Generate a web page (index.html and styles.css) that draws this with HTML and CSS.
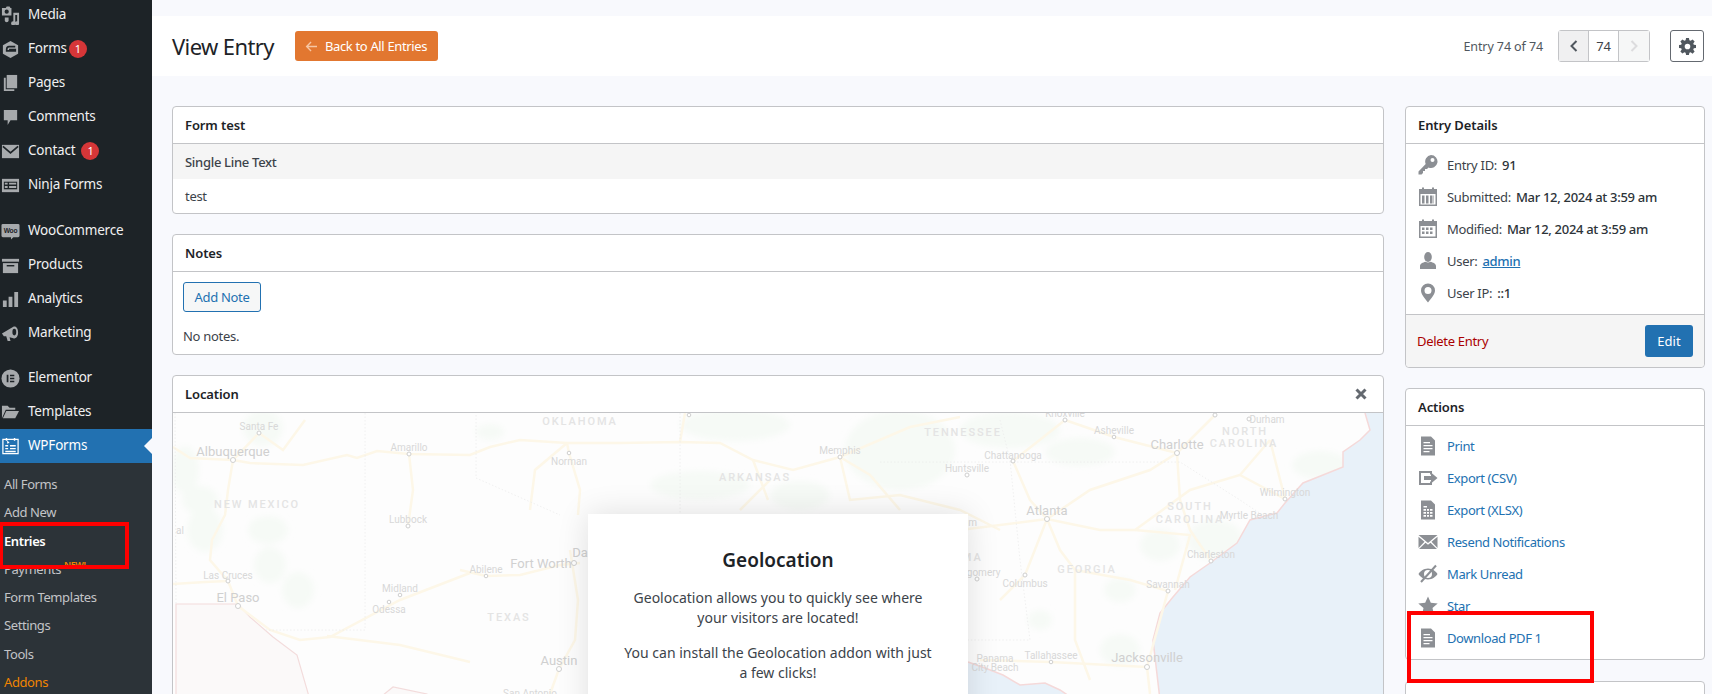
FILE: index.html
```html
<!DOCTYPE html>
<html lang="en">
<head>
  <meta charset="UTF-8">
  <title>View Entry</title>
  <link rel="stylesheet" href="styles.css">
</head>
<body>

<aside class="sidebar">
  <ul class="menu">
    <li class="menu-item">
      <svg class="menu-ico" viewBox="0 0 20 20"><path d="M1 2h4l1-1.500h3l1 1.500h1v8H1z"/><circle cx="6" cy="6" r="2.200" fill="#1d2327"/><path d="M13 7h6v11a2.200 2.200 0 1 1-2-2V9.500h-2V18a2.200 2.200 0 1 1-2-2z"/><path d="M4 12h4v3a2 2 0 1 1-4 0z"/></svg>
      <span>Media</span>
    </li>
    <li class="menu-item">
      <svg class="menu-ico" viewBox="0 0 20 20"><path d="M10 1l8 4.500v9L10 19l-8-4.500v-9z"/><path d="M15 7H8.500C7 7 6 8 6 10v1.500h9V10H8.500" fill="none" stroke="#1d2327" stroke-width="1.800"/></svg>
      <span>Forms</span><b class="badge">1</b>
    </li>
    <li class="menu-item">
      <svg class="menu-ico" viewBox="0 0 20 20"><path d="M6 1h11v14H6z"/><path d="M3 4h2v12h9v2H3z"/></svg>
      <span>Pages</span>
    </li>
    <li class="menu-item">
      <svg class="menu-ico" viewBox="0 0 20 20"><path d="M3 2h14v11h-7l-3 5v-5H3z"/></svg>
      <span>Comments</span>
    </li>
    <li class="menu-item">
      <svg class="menu-ico" viewBox="0 0 20 20"><path d="M1 3h18v14H1z"/><path d="M2 4.500l8 7 8-7" fill="none" stroke="#1d2327" stroke-width="1.800"/></svg>
      <span>Contact</span><b class="badge badge-far">1</b>
    </li>
    <li class="menu-item">
      <svg class="menu-ico" viewBox="0 0 20 20"><path d="M1 3h18v14H1z"/><path d="M3 6h14v8H3z" fill="#1d2327"/><path d="M4 7h3v2H4zm0 3.500h3v2H4zM8.500 7H16v2H8.500zm0 3.500H16v2H8.500z"/></svg>
      <span>Ninja Forms</span>
    </li>
    <li class="menu-item menu-gap">
      <svg class="menu-ico" viewBox="0 0 20 20"><path d="M2 2h16a1.500 1.500 0 0 1 1.500 1.500v11a1.500 1.500 0 0 1-1.500 1.500h-5l-2.500 2.500V16H2a1.500 1.500 0 0 1-1.500-1.500v-11A1.500 1.500 0 0 1 2 2z"/><text class="woo-mark" x="10" y="11.500" text-anchor="middle">Woo</text></svg>
      <span>WooCommerce</span>
    </li>
    <li class="menu-item">
      <svg class="menu-ico" viewBox="0 0 20 20"><path d="M1 3h18v3H1z"/><path d="M2 7.500h16V18H2z"/><path d="M6 9.500h8v1.500H6z" fill="#1d2327"/></svg>
      <span>Products</span>
    </li>
    <li class="menu-item">
      <svg class="menu-ico" viewBox="0 0 20 20"><path d="M2 11h4v7H2zm6-4h4v11H8zm6-5h4v16h-4z"/></svg>
      <span>Analytics</span>
    </li>
    <li class="menu-item">
      <svg class="menu-ico" viewBox="0 0 20 20"><path d="M1 10l12-7c2-1 5 1 5 6s-3 7-5 6l-4-1 1 4H7l-1.500-5H3z"/><ellipse cx="14" cy="8.500" rx="2" ry="3.500" fill="#1d2327"/></svg>
      <span>Marketing</span>
    </li>
    <li class="menu-item menu-gap-small">
      <svg class="menu-ico" viewBox="0 0 20 20"><circle cx="10" cy="10" r="9.500"/><path d="M6 6h1.800v8H6zm3.500 0H14v1.600H9.500zm0 3.200H14v1.600H9.500zm0 3.200H14V14H9.500z" fill="#1d2327"/></svg>
      <span>Elementor</span>
    </li>
    <li class="menu-item">
      <svg class="menu-ico" viewBox="0 0 20 20"><path d="M1 3h6l2 2h6v2H5l-4 9z"/><path d="M5.500 8.500H19L15 16H2z"/></svg>
      <span>Templates</span>
    </li>
    <li class="menu-item menu-current">
      <svg class="menu-ico" viewBox="0 0 20 20"><path d="M2 2.500h16v15H2z" fill="none" stroke="#fff" stroke-width="1.300"/><path d="M5 1h1.500v3H5zm8.500 0H15v3h-1.500zM6.500 3.500L9 6l-2.500 1zM4.500 8.500h3V10h-3zm5 0h6V10h-6zm-5 3h3V13h-3zm5 0h6V13h-6zm-5 3h11V16h-11z" fill="#fff"/></svg>
      <span>WPForms</span>
    </li>
  </ul>
  <ul class="submenu">
    <li>All Forms</li>
    <li>Add New</li>
    <li class="sub-current">Entries</li>
    <li class="sub-new">Payments<em class="new-tag">NEW!</em></li>
    <li>Form Templates</li>
    <li>Settings</li>
    <li>Tools</li>
    <li class="sub-addons">Addons</li>
  </ul>
</aside>

<main class="page">
  <header class="topbar">
    <h1>View Entry</h1>
    <a class="back-btn">
      <svg viewBox="0 0 14 12" width="13" height="11"><path d="M13 6H2M6.500 1.200L1.700 6l4.800 4.800" fill="none" stroke="#f6c6a4" stroke-width="1.500"/></svg>
      Back to All Entries
    </a>
    <span class="entry-count">Entry 74 of 74</span>
    <div class="pager">
      <span class="pager-prev"><svg viewBox="0 0 8 12" width="8" height="12"><path d="M6.500 1L1.500 6l5 5" fill="none" stroke="#50575e" stroke-width="2"/></svg></span>
      <span class="pager-num">74</span>
      <span class="pager-next"><svg viewBox="0 0 8 12" width="8" height="12"><path d="M1.500 1l5 5-5 5" fill="none" stroke="#dcdcde" stroke-width="2"/></svg></span>
    </div>
    <button class="gear-btn">
      <svg viewBox="0 0 20 20" width="17" height="17"><path fill="#50575e" fill-rule="evenodd" d="M8.300 0h3.400l.5 2.700 1.500.6 2.300-1.600 2.400 2.400-1.600 2.300.6 1.500 2.600.4v3.400l-2.600.5-.6 1.500 1.600 2.300-2.400 2.400-2.300-1.600-1.500.6-.5 2.600H8.300l-.5-2.600-1.500-.6L4 18.300l-2.400-2.400 1.600-2.300-.6-1.500L0 11.700V8.300l2.600-.4.6-1.500-1.600-2.300L4 1.700l2.300 1.600 1.500-.6zM10 6.700a3.300 3.300 0 1 0 0 6.600 3.300 3.300 0 0 0 0-6.600z"/></svg>
    </button>
  </header>

  <div class="columns">
    <div class="col-left">
      <section class="card">
        <h2 class="card-title">Form test</h2>
        <div class="field-name">Single Line Text</div>
        <div class="field-value">test</div>
      </section>

      <section class="card">
        <h2 class="card-title">Notes</h2>
        <div class="notes-body">
          <button class="note-btn">Add Note</button>
          <p class="no-notes">No notes.</p>
        </div>
      </section>

      <section class="card card-map">
        <h2 class="card-title">Location
          <svg class="close-x" viewBox="0 0 12 12" width="12" height="12"><path d="M1.500 1.500l9 9m0-9l-9 9" stroke="#646970" stroke-width="3"/></svg>
        </h2>
        <div class="map">
          <svg class="map-svg" viewBox="173 413 1210 300" width="1210" height="300">
            <defs><filter id="soft"><feGaussianBlur stdDeviation="3"/></filter></defs>
            <rect x="173" y="413" width="1210" height="300" fill="#fdfdfd"/>

            <g fill="#f6faf6" filter="url(#soft)">
              <ellipse cx="263" cy="428" rx="20" ry="18"/>
              <ellipse cx="185" cy="470" rx="14" ry="24"/>
              <ellipse cx="200" cy="500" rx="18" ry="14"/>
              <ellipse cx="205" cy="530" rx="18" ry="22"/>
              <ellipse cx="268" cy="530" rx="20" ry="14"/>
              <ellipse cx="270" cy="565" rx="16" ry="18"/>
              <ellipse cx="298" cy="590" rx="16" ry="18"/>
              <ellipse cx="490" cy="432" rx="14" ry="8"/>
              <ellipse cx="735" cy="425" rx="55" ry="16"/>
              <ellipse cx="700" cy="485" rx="50" ry="14"/>
              <ellipse cx="800" cy="495" rx="30" ry="14"/>
              <ellipse cx="900" cy="450" rx="55" ry="40"/>
              <ellipse cx="1010" cy="430" rx="50" ry="18"/>
              <ellipse cx="1080" cy="452" rx="35" ry="14"/>
              <ellipse cx="1120" cy="590" rx="16" ry="12"/>
              <ellipse cx="1160" cy="545" rx="20" ry="16"/>
              <ellipse cx="1215" cy="540" rx="28" ry="20"/>
              <ellipse cx="1320" cy="465" rx="28" ry="14"/>
              <ellipse cx="1040" cy="620" rx="12" ry="10"/>
              <ellipse cx="1120" cy="650" rx="20" ry="16"/>
            </g>

            <path d="M176 604H238L250 617 273 637 297 655 310 700H176z" fill="#fbf9f9" stroke="#f3dcdc" stroke-width="1.200"/>
            <path d="M377 700L393 687 427 694 430 700z" fill="#fbf9f9" stroke="#f3dcdc" stroke-width="1.200"/>

            <path d="M1365 413L1370 430 1360 440 1343 452 1343 467 1323 475 1303 483 1285 503 1277 513 1250 520 1237 543 1210 563 1190 577 1173 597 1160 613 1153 640 1160 700H1383V413z" fill="#e8f1f9"/>
            <path d="M968 662L985 668 1003 675 1020 685 1045 683 1060 690 1075 700H968z" fill="#e8f1f9"/>
            <path d="M1365 413L1370 430 1360 440 1343 452 1343 467 1323 475 1303 483 1285 503 1277 513 1250 520 1237 543 1210 563 1190 577 1173 597 1160 613 1153 640 1160 700M968 662L985 668 1003 675 1020 685 1045 683 1060 690 1075 700" fill="none" stroke="#f5d9d9" stroke-width="1.500"/>

            <g class="roads">
              <path d="M173 447L190 458 233 460 250 463 303 465 347 455 357 458 377 451 409 454 470 455 490 447 520 440 567 443 620 443 680 442 720 443 753 460 793 470 840 457 910 427 960 417"/>
              <path d="M233 460L228 490 225 515 212 540 210 560 228 581 238 606 270 630 300 640 330 637 400 600 470 573"/>
              <path d="M173 584L205 582 228 581"/>
              <path d="M259 433L233 460M259 433L283 450 305 420"/>
              <path d="M409 454L413 490 408 526"/>
              <path d="M327 636L400 645 470 662"/>
              <path d="M460 570L486 576 520 575 560 565 580 563"/>
              <path d="M567 443L569 453 580 490 578 515"/>
              <path d="M567 443L535 470 530 510"/>
              <path d="M570 550L578 600 575 640 559 669 550 694"/>
              <path d="M680 442L685 413"/>
              <path d="M753 460L768 500M770 480L740 510"/>
              <path d="M840 457L850 500 900 495 960 510 1000 530"/>
              <path d="M840 457L870 475 900 510"/>
              <path d="M960 530L1047 519 1100 530 1135 530 1190 490 1240 475 1270 440"/>
              <path d="M1047 519L1090 490 1150 470 1177 453 1215 415"/>
              <path d="M1013 461L1030 500 1047 519 1060 550 1075 570 1075 640 1090 680"/>
              <path d="M1047 519L1025 575 1000 600"/>
              <path d="M1075 570L1130 580 1168 591 1147 667 1150 694"/>
              <path d="M1177 453L1180 500 1190 530 1211 561"/>
              <path d="M1065 420L1013 461M1065 420L1114 437 1177 453"/>
              <path d="M1135 530L1190 535 1175 590"/>
              <path d="M1240 475L1285 499M1270 440L1285 499"/>
              <path d="M980 660L1051 662 1147 667"/>
            </g>

            <g class="borders">
              <path d="M365 413V630H265"/>
              <path d="M175 413L176 604"/>
              <path d="M476 415V478L560 515"/>
              <path d="M680 413V540"/>
              <path d="M1000 420L1010 460 1020 560 1030 640H968"/>
              <path d="M1010 462H1180L1240 500 1270 520"/>
              <path d="M880 462H1010"/>
            </g>

            <g class="dots">
              <circle cx="259" cy="433" r="2"/><circle cx="233" cy="460" r="2.500"/><circle cx="409" cy="454" r="2"/>
              <circle cx="408" cy="526" r="2"/><circle cx="228" cy="581" r="2"/><circle cx="238" cy="606" r="2.500"/>
              <circle cx="400" cy="595" r="1.800"/><circle cx="389" cy="602" r="1.800"/><circle cx="569" cy="453" r="1.800"/>
              <circle cx="689" cy="415" r="1.800"/><circle cx="840" cy="457" r="2"/><circle cx="967" cy="475" r="2"/>
              <circle cx="486" cy="576" r="1.800"/><circle cx="574" cy="563" r="2.500"/><circle cx="559" cy="669" r="2.500"/>
              <circle cx="1065" cy="420" r="2"/><circle cx="1114" cy="437" r="1.800"/><circle cx="1249" cy="419" r="2"/>
              <circle cx="1215" cy="415" r="2"/><circle cx="1177" cy="453" r="2.500"/><circle cx="1013" cy="461" r="2"/>
              <circle cx="1047" cy="519" r="2.500"/><circle cx="1285" cy="499" r="2"/><circle cx="1211" cy="561" r="2"/>
              <circle cx="1025" cy="575" r="2"/><circle cx="1168" cy="591" r="2"/><circle cx="1051" cy="662" r="1.800"/>
              <circle cx="1147" cy="667" r="2.500"/><circle cx="977" cy="579" r="2"/>
            </g>

            <g class="map-state">
              <text x="580" y="425">OKLAHOMA</text>
              <text x="257" y="508">NEW MEXICO</text>
              <text x="755" y="481">ARKANSAS</text>
              <text x="963" y="436">TENNESSEE</text>
              <text x="509" y="621">TEXAS</text>
              <text x="1245" y="435">NORTH</text>
              <text x="1244" y="447">CAROLINA</text>
              <text x="1190" y="510">SOUTH</text>
              <text x="1190" y="523">CAROLINA</text>
              <text x="1087" y="573">GEORGIA</text>
              <text x="950" y="561">ALABAMA</text>
            </g>
            <g class="map-city">
              <text x="259" y="430">Santa Fe</text>
              <text x="409" y="451">Amarillo</text>
              <text x="408" y="523">Lubbock</text>
              <text x="228" y="579">Las Cruces</text>
              <text x="400" y="592">Midland</text>
              <text x="389" y="613">Odessa</text>
              <text x="180" y="534">al</text>
              <text x="569" y="465">Norman</text>
              <text x="840" y="454">Memphis</text>
              <text x="967" y="472">Huntsville</text>
              <text x="486" y="573">Abilene</text>
              <text x="1065" y="417">Knoxville</text>
              <text x="1114" y="434">Asheville</text>
              <text x="1267" y="423">Durham</text>
              <text x="1013" y="459">Chattanooga</text>
              <text x="1249" y="519">Myrtle Beach</text>
              <text x="1285" y="496">Wilmington</text>
              <text x="1211" y="558">Charleston</text>
              <text x="1025" y="587">Columbus</text>
              <text x="1168" y="588">Savannah</text>
              <text x="1051" y="659">Tallahassee</text>
              <text x="995" y="662">Panama</text>
              <text x="995" y="671">City Beach</text>
              <text x="950" y="526">Birmingham</text>
              <text x="972" y="576">Montgomery</text>
              <text x="530" y="697">San Antonio</text>
            </g>
            <g class="map-big">
              <text x="233" y="456">Albuquerque</text>
              <text x="238" y="602">El Paso</text>
              <text x="541" y="568">Fort Worth</text>
              <text x="590" y="557">Dallas</text>
              <text x="559" y="665">Austin</text>
              <text x="1177" y="449">Charlotte</text>
              <text x="1047" y="515">Atlanta</text>
              <text x="1147" y="662">Jacksonville</text>
            </g>
          </svg>
          <div class="geo-modal">
            <h3>Geolocation</h3>
            <p>Geolocation allows you to quickly see where your visitors are located!</p>
            <p>You can install the Geolocation addon with just a few clicks!</p>
          </div>
        </div>
      </section>
    </div>

    <div class="col-right">
      <section class="card">
        <h2 class="card-title">Entry Details</h2>
        <ul class="detail-list">
          <li>
            <svg class="row-ico" viewBox="0 0 20 20"><path fill-rule="evenodd" d="M13 0a6.500 6.500 0 1 1-2.500 12.500L9 14H7v2H5v2l-1.500 1.500H.500v-3L7.700 9A6.500 6.500 0 0 1 13 0zm1.500 3a2 2 0 1 0 0 4 2 2 0 0 0 0-4z"/></svg>
            <span>Entry ID:</span><strong>91</strong>
          </li>
          <li>
            <svg class="row-ico" viewBox="0 0 20 20"><path fill-rule="evenodd" d="M1 2h3V.500h2V2h8V.500h2V2h3v17H1zm1.500 5v10.500h15V7zM4 8.500h2.500v8H4zm4 0h2.500v8H8zm4 0h2.500v8H12zm3.500 0H16v8h-.5z"/></svg>
            <span>Submitted:</span><strong>Mar 12, 2024 at 3:59 am</strong>
          </li>
          <li>
            <svg class="row-ico" viewBox="0 0 20 20"><path fill-rule="evenodd" d="M1 2h3V.500h2V2h8V.500h2V2h3v17H1zm1.500 5v10.500h15V7zM4 8.500h2.500V11H4zm4 0h2.500V11H8zm4 0h2.500V11H12zM4 12.500h2.500V15H4zm4 0h2.500V15H8zm4 0h2.500V15H12z"/></svg>
            <span>Modified:</span><strong>Mar 12, 2024 at 3:59 am</strong>
          </li>
          <li>
            <svg class="row-ico" viewBox="0 0 20 20"><ellipse cx="10" cy="6" rx="3.800" ry="5"/><path d="M2 18v-3c0-2.500 3-3.500 5.500-4.300 1.500 1 3.500 1 5 0 2.500.8 5.500 1.800 5.500 4.300v3z"/></svg>
            <span>User:</span><a class="user-link">admin</a>
          </li>
          <li>
            <svg class="row-ico" viewBox="0 0 20 20"><path fill-rule="evenodd" d="M10 .500a7 7 0 0 1 7 7c0 4-4 8-7 12-3-4-7-8-7-12a7 7 0 0 1 7-7zm0 3.500a3.500 3.500 0 1 0 0 7 3.500 3.500 0 0 0 0-7z"/></svg>
            <span>User IP:</span><strong>::1</strong>
          </li>
        </ul>
        <footer class="card-foot">
          <a class="delete-link">Delete Entry</a>
          <button class="edit-btn">Edit</button>
        </footer>
      </section>

      <section class="card">
        <h2 class="card-title">Actions</h2>
        <ul class="action-list">
          <li>
            <svg class="row-ico" viewBox="0 0 20 20"><path fill-rule="evenodd" d="M3 .500h10l4 4v15H3zM5.500 6v1.200H12V6zm0 3v1.200h9V9zm0 3v1.200h9V12zm0 3v1.200h6V15z"/></svg>
            Print
          </li>
          <li>
            <svg class="row-ico" viewBox="0 0 20 20"><path d="M1 3h13v3.500h-2V5H3v10h9v-1.500h2V17H1z"/><path d="M6 8h7V4.500l6.500 5.500-6.500 5.500V12H6z"/></svg>
            Export (CSV)
          </li>
          <li>
            <svg class="row-ico" viewBox="0 0 20 20"><path fill-rule="evenodd" d="M3 .500h10l4 4v15H3zM5.500 6v1.500H9V6zm0 3v1.800h2.500V9zm3.500 0v1.800h2V9zm3 0v1.800h2.500V9zm-6.500 3v1.800h2.500V12zm3.500 0v1.800h2V12zm3 0v1.800h2.500V12zm-6.500 3v1.800h2.500V15zm3.500 0v1.800h2V15zm3 0v1.800h2.500V15z"/></svg>
            Export (XLSX)
          </li>
          <li>
            <svg class="row-ico" viewBox="0 0 20 20"><path d="M.500 3h19l-9.500 8z"/><path d="M.500 4.800l6 5-6 6.200zm19 0l-6 5 6 6.200zM7.500 10.800l2.500 2 2.500-2 6.500 6.200H1z"/></svg>
            Resend Notifications
          </li>
          <li>
            <svg class="row-ico" viewBox="0 0 20 20"><path fill-rule="evenodd" d="M10 4.500c4.500 0 8 3 9.500 5.500-1.500 2.500-5 5.500-9.500 5.500S2 12.500.500 10C2 7.500 5.500 4.500 10 4.500zM10 6a4 4 0 1 0 0 8 4 4 0 0 0 0-8z"/><path d="M18 1.500L3 18" stroke="#8c8f94" stroke-width="2" fill="none"/></svg>
            Mark Unread
          </li>
          <li>
            <svg class="row-ico" viewBox="0 0 20 20"><path d="M10 .500l2.800 6.300 6.900.7-5.200 4.600 1.500 6.800L10 15.400l-6 3.500 1.500-6.800L.300 7.500l6.900-.7z"/></svg>
            Star
          </li>
          <li>
            <svg class="row-ico" viewBox="0 0 20 20"><path fill-rule="evenodd" d="M3 .500h10l4 4v15H3zM5.500 6v1.200H12V6zm0 3v1.200h9V9zm0 3v1.200h9V12zm0 3v1.200h6V15z"/></svg>
            Download PDF 1
          </li>
        </ul>
      </section>

      <section class="card card-next"></section>
    </div>
  </div>
</main>

<div class="mark mark-entries"></div>
<div class="mark mark-pdf"></div>

</body>
</html>
```

FILE: styles.css
```css
* {
  box-sizing: border-box;
}
html, body {
  height: 100%;
}
body {
  margin: 0;
  position: relative;
  display: flex;
  overflow: hidden;
  font-family: "Noto Sans", Arial, sans-serif;
  font-size: 13px;
  letter-spacing: -0.3px;
  color: #3c434a;
  background: #f8f9fd;
}
ul {
  list-style: none;
  margin: 0;
  padding: 0;
}

/* sidebar */
.sidebar {
  flex: 0 0 152px;
  height: 694px;
  overflow: hidden;
  background: #1d2327;
  color: #f0f0f1;
  font-size: 13.5px;
  letter-spacing: -0.2px;
}
.menu {
  margin-top: -2px;
}
.menu-item {
  display: flex;
  align-items: center;
  height: 34px;
  padding-left: 1px;
}
.menu-item span {
  padding-bottom: 3px;
}
.menu-gap {
  margin-top: 12px;
}
.menu-gap-small {
  margin-top: 11px;
}
.menu-ico {
  flex: none;
  width: 19px;
  height: 19px;
  margin-right: 8px;
  fill: #a7aaad;
}
.woo-mark {
  font-family: "Liberation Sans", sans-serif;
  font-size: 7px;
  font-weight: 700;
  fill: #1d2327;
}
.badge {
  display: inline-block;
  width: 18px;
  height: 18px;
  margin-left: 2px;
  border-radius: 50%;
  background: #d63638;
  color: #fff;
  font-size: 11px;
  font-weight: 400;
  line-height: 18px;
  text-align: center;
}
.badge-far {
  margin-left: 6px;
}
.menu-current {
  position: relative;
  background: #2271b1;
  color: #fff;
}
.menu-current::after {
  content: "";
  position: absolute;
  right: 0;
  top: 9px;
  border: 8px solid transparent;
  border-right-color: #f8f9fd;
  border-left-width: 0;
}
.submenu {
  padding-top: 7px;
  background: #2c3338;
  color: #c3c4c7;
  font-size: 13px;
  letter-spacing: -0.4px;
}
.submenu li {
  height: 28.3px;
  padding-left: 4px;
  line-height: 28px;
}
.sub-current {
  color: #fff;
  font-weight: 600;
}
.sub-new {
  position: relative;
}
.new-tag {
  position: absolute;
  left: 64px;
  top: -4px;
  color: #f18500;
  font-size: 9px;
  font-style: normal;
  font-weight: 600;
}
.sub-addons {
  color: #f18500;
}

/* top bar */
.page {
  flex: 1;
  min-width: 0;
  padding-top: 16px;
}
.topbar {
  display: flex;
  align-items: center;
  height: 60px;
  padding: 0 8px 0 20px;
  background: #fff;
}
.topbar h1 {
  margin: 0 21px 0 0;
  font-size: 22px;
  font-weight: 400;
  letter-spacing: -0.6px;
  color: #1d2327;
}
.back-btn {
  display: flex;
  align-items: center;
  gap: 7px;
  height: 30px;
  padding: 0 11px 0 10px;
  border-radius: 3px;
  background: #e27730;
  color: #fff;
  font-size: 13px;
  letter-spacing: -0.35px;
}
.entry-count {
  margin-left: auto;
  margin-right: 15px;
  font-size: 12.5px;
  letter-spacing: -0.1px;
  color: #50575e;
}
.pager {
  display: flex;
  height: 32px;
  margin-right: 20px;
  border: 1px solid #c3c4c7;
  border-radius: 3px;
  font-size: 13px;
  color: #3c434a;
}
.pager span {
  display: flex;
  align-items: center;
  justify-content: center;
}
.pager-prev {
  width: 30px;
  background: #f0f0f1;
  border-right: 1px solid #c3c4c7;
}
.pager-num {
  width: 29px;
  background: #fff;
}
.pager-next {
  width: 31px;
  background: #f6f7f7;
  border-left: 1px solid #c3c4c7;
}
.gear-btn {
  display: flex;
  align-items: center;
  justify-content: center;
  width: 34px;
  height: 32px;
  padding: 0;
  border: 1px solid #646970;
  border-radius: 3px;
  background: #fff;
}

/* columns and cards */
.columns {
  display: flex;
  gap: 21px;
  padding: 30px 8px 0 20px;
}
.col-left {
  display: flex;
  flex-direction: column;
  gap: 20px;
  flex: 0 0 1211px;
}
.col-right {
  display: flex;
  flex-direction: column;
  gap: 20px;
  flex: 0 0 300px;
}
.card {
  border: 1px solid #c3c4c7;
  border-radius: 4px;
  background: #fff;
}
.card-title {
  position: relative;
  height: 37px;
  margin: 0;
  padding: 0 12px;
  border-bottom: 1px solid #c3c4c7;
  font-size: 13px;
  font-weight: 600;
  letter-spacing: -0.1px;
  line-height: 36px;
  color: #1d2327;
}
.close-x {
  position: absolute;
  right: 16px;
  top: 12px;
}
.field-name {
  height: 35px;
  padding: 0 12px;
  background: #f5f5f5;
  font-weight: 500;
  line-height: 37px;
}
.field-value {
  height: 34px;
  padding: 0 12px;
  line-height: 35px;
}
.notes-body {
  height: 82px;
  padding: 10px;
}
.note-btn {
  display: block;
  width: 78px;
  height: 30px;
  padding: 0;
  border: 1px solid #2271b1;
  border-radius: 3px;
  background: #f6f7f7;
  color: #2271b1;
  font-family: inherit;
  font-size: 13px;
  letter-spacing: -0.3px;
}
.no-notes {
  margin: 15px 0 0;
  line-height: 18px;
}
.card-map {
  height: 400px;
}
.card-map .card-title {
  line-height: 37px;
}
.map {
  position: relative;
  height: 300px;
  overflow: hidden;
}
.map-svg {
  display: block;
  letter-spacing: 0;
}
.roads path {
  fill: none;
  stroke: #fdf7e8;
  stroke-width: 2.500;
}
.borders path {
  fill: none;
  stroke: #ececec;
  stroke-width: 0.8;
  stroke-dasharray: 1.500 2;
}
.dots circle {
  fill: #fff;
  stroke: #cfcfcf;
  stroke-width: 1;
}
.map-state text {
  font-family: Roboto, sans-serif;
  font-size: 11px;
  font-weight: 500;
  letter-spacing: 1.900px;
  text-anchor: middle;
  fill: #e4e4e4;
}
.map-city text {
  font-family: Roboto, sans-serif;
  font-size: 10px;
  text-anchor: middle;
  fill: #d8d8d8;
}
.map-big text {
  font-family: Roboto, sans-serif;
  font-size: 13px;
  text-anchor: middle;
  fill: #d0d0d0;
}
.geo-modal {
  position: absolute;
  left: 415px;
  top: 101px;
  width: 380px;
  height: 300px;
  padding: 33px 33px 0;
  background: #fff;
  box-shadow: 0 0 30px rgba(0, 0, 0, 0.12);
  text-align: center;
  font-size: 14px;
  letter-spacing: 0;
  line-height: 20px;
  color: #3c434a;
}
.geo-modal h3 {
  margin: 0 0 15px;
  font-size: 19px;
  font-weight: 600;
  line-height: 26px;
  color: #1d2327;
}
.geo-modal p {
  margin: 0 0 15px;
}

/* right column */
.detail-list {
  height: 170px;
  padding-top: 5px;
}
.detail-list li,
.action-list li {
  display: flex;
  align-items: center;
  height: 32px;
  padding-left: 12px;
}
.row-ico {
  flex: none;
  width: 20px;
  height: 20px;
  margin-right: 9px;
  fill: #8c8f94;
}
.detail-list strong {
  margin-left: 5px;
  font-weight: 500;
  color: #2c3338;
}
.user-link {
  margin-left: 5px;
  font-weight: 500;
  color: #2271b1;
  text-decoration: underline;
}
.card-foot {
  display: flex;
  align-items: center;
  justify-content: space-between;
  height: 53px;
  padding: 0 11px 0 11px;
  border-top: 1px solid #c3c4c7;
  background: #f5f5f5;
  border-radius: 0 0 4px 4px;
}
.delete-link {
  color: #a00;
}
.edit-btn {
  width: 48px;
  height: 32px;
  padding: 0;
  border: 0;
  border-radius: 3px;
  background: #2271b1;
  color: #fff;
  font-family: inherit;
  font-size: 13px;
}
.action-list {
  height: 233px;
  padding-top: 4px;
  color: #2271b1;
  letter-spacing: -0.4px;
}
.card-next {
  height: 40px;
  margin-top: 1px;
}

/* red annotation boxes on the screenshot */
.mark {
  position: absolute;
  border: 4px solid #f00;
}
.mark-entries {
  left: 0;
  top: 522px;
  width: 129px;
  height: 47px;
  border-left-width: 3px;
}
.mark-pdf {
  left: 1407px;
  top: 611px;
  width: 187px;
  height: 72px;
}
```
